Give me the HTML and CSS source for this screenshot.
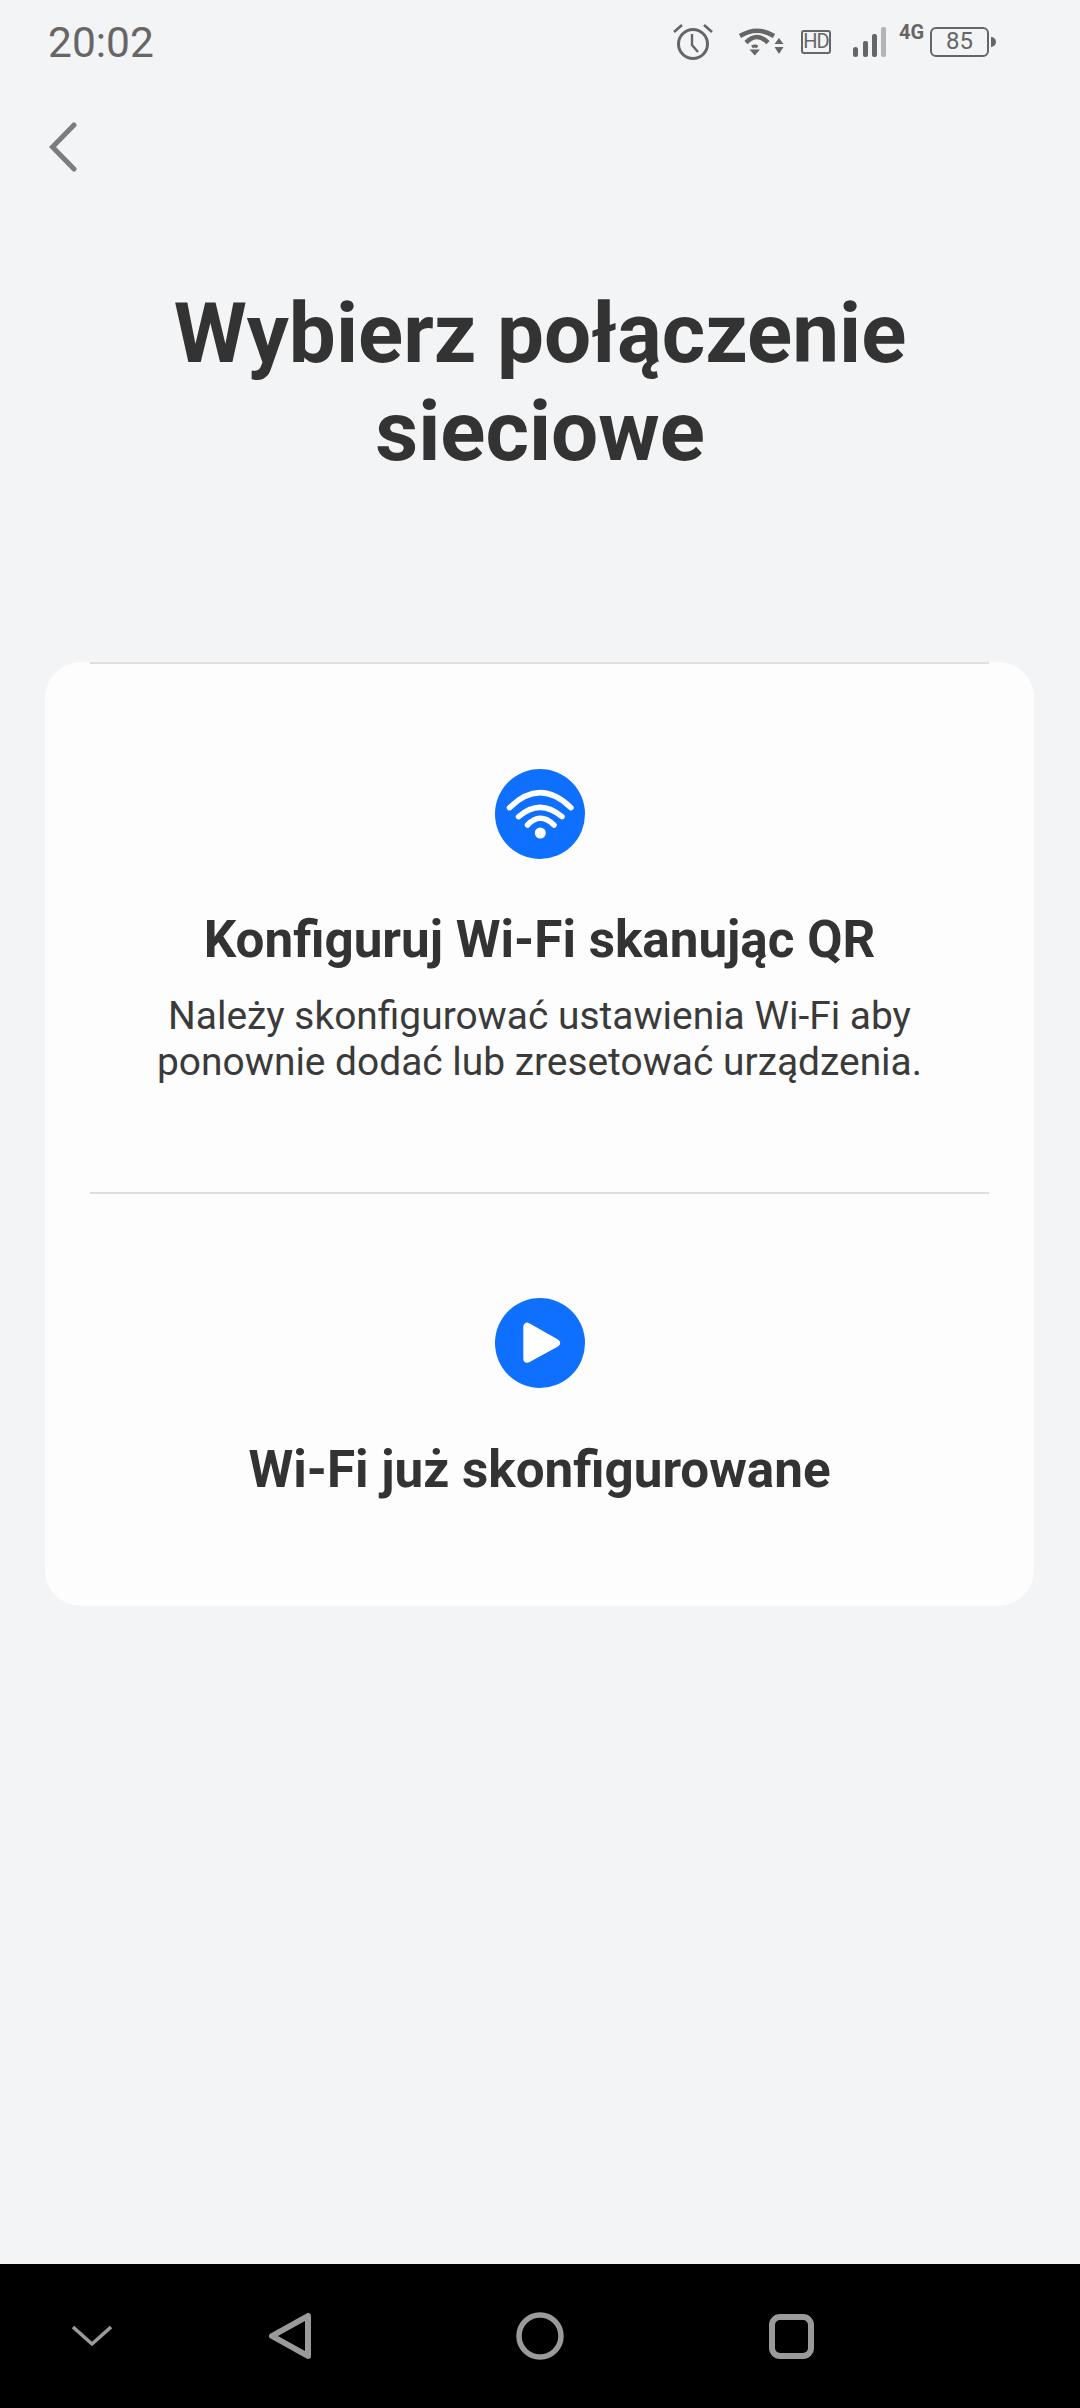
FILE: index.html
```html
<!DOCTYPE html>
<html lang="pl">
  <head>
    <meta charset="UTF-8" />
    <meta name="viewport" content="width=device-width, initial-scale=1.0" />
    <title>Wybierz połączenie sieciowe</title>
    <link rel="stylesheet" href="styles.css">
  </head>
  <body>
    <div class="screen">
      <div class="status-bar">
        <span class="clock">20:02</span>
        <div class="status-icons">
          <svg class="ico-alarm" width="40" height="36" viewBox="0 0 40 36" fill="none" stroke="#666" stroke-width="3">
            <circle cx="20" cy="20" r="14.500" />
            <path d="M19 10v11l6 7" stroke-width="2.400" />
            <path d="M1 8l8-7M39 8l-8-7" stroke-width="2.600" />
          </svg>
          <svg class="ico-wifi" width="46" height="28" viewBox="0 0 46 28" fill="none" stroke="#666">
            <path d="M2 8Q19-2.600 36 8" stroke-width="4.500" />
            <path d="M8 14.700Q19 3.500 30 14.700" stroke-width="4.500" />
            <path d="M11.500 21.500h10.500l-5.200 6z" fill="#666" stroke="none" />
            <path d="M14 19q3-2 5.500 0" stroke-width="3" />
            <path d="M41 10l4.500 6h-9zM41 26l4.500-7h-9z" fill="#666" stroke="none" />
          </svg>
          <span class="ico-hd">HD</span>
          <svg class="ico-signal" width="33" height="30" viewBox="0 0 33 30">
            <rect x="0" y="20" width="5" height="10" rx="2.500" fill="#666" />
            <rect x="10" y="14" width="5" height="16" rx="2" fill="#666" />
            <rect x="19" y="7" width="5" height="23" rx="2" fill="#666" />
            <rect x="28" y="0" width="5" height="30" rx="2" fill="#b4b4b4" />
          </svg>
          <span class="ico-4g">4G</span>
          <div class="battery">
            <span class="battery-body">85</span>
            <span class="battery-tip"></span>
          </div>
        </div>
      </div>

      <div class="top-nav">
        <svg width="30" height="50" viewBox="0 0 30 50" fill="none" stroke="#7b7c7d" stroke-width="5" stroke-linecap="round" stroke-linejoin="miter">
          <path d="M26 3L4.500 25 26 47" />
        </svg>
      </div>

      <h1 class="title">Wybierz połączenie<br />sieciowe</h1>

      <div class="card">
        <div class="option option-qr">
          <svg class="option-icon" width="90" height="90" viewBox="0 0 90 90">
            <circle cx="45" cy="45" r="45" fill="#0f6fff" />
            <g fill="none" stroke="#fff" stroke-width="5.500" stroke-linecap="round">
              <path d="M14.500 38.700Q45 8.700 76 38.700" />
              <path d="M23.500 47.700Q45 28.900 67 47.700" />
              <path d="M32.500 56Q45 42.600 59 56" />
            </g>
            <circle cx="45.300" cy="64" r="5.500" fill="#fff" />
          </svg>
          <h2 class="option-title">Konfiguruj Wi-Fi skanując QR</h2>
          <p class="option-desc">Należy skonfigurować ustawienia Wi-Fi aby<br />ponownie dodać lub zresetować urządzenia.</p>
        </div>
        <div class="option option-done">
          <svg class="option-icon" width="90" height="90" viewBox="0 0 90 90">
            <circle cx="45" cy="45" r="45" fill="#0f6fff" />
            <path d="M32.300 28.700v32L61 45z" fill="#fff" stroke="#fff" stroke-width="8" stroke-linejoin="round" />
          </svg>
          <h2 class="option-title">Wi-Fi już skonfigurowane</h2>
        </div>
      </div>

      <div class="nav-bar">
        <svg width="40" height="22" viewBox="0 0 40 22" fill="none" stroke="#9a9a9a" stroke-width="3.500" stroke-linejoin="round">
          <path d="M1 2l19 17L39 2" />
        </svg>
        <svg width="44" height="48" viewBox="0 0 44 48" fill="none" stroke="#9a9a9a" stroke-width="6" stroke-linejoin="round">
          <path d="M40 4v40L4 24z" />
        </svg>
        <svg width="48" height="48" viewBox="0 0 48 48" fill="none" stroke="#9a9a9a" stroke-width="5.500">
          <circle cx="24" cy="24" r="21" />
        </svg>
        <svg width="45" height="45" viewBox="0 0 45 45" fill="none" stroke="#9a9a9a" stroke-width="6">
          <rect x="3" y="3" width="39" height="39" rx="8" />
        </svg>
      </div>
    </div>
  </body>
</html>
```

FILE: styles.css
```css
* {
  margin: 0;
  padding: 0;
  box-sizing: border-box;
}

body {
  background: #f3f4f6;
  font-family: Roboto, sans-serif;
  color: #333;
}

.screen {
  width: 1080px;
  height: 2408px;
  display: flex;
  flex-direction: column;
  overflow: hidden;
}

.status-bar {
  height: 84px;
  padding: 0 84px 0 48px;
  display: flex;
  justify-content: space-between;
  align-items: center;
  color: #666;
}

.clock {
  margin-top: 2px;
  font-size: 42.500px;
  line-height: 42px;
}

.status-icons {
  display: flex;
  align-items: center;
  height: 36px;
}

.ico-wifi {
  margin-left: 25px;
}

.ico-hd {
  margin-left: 17px;
  width: 30px;
  height: 24px;
  border: 2.500px solid #666;
  border-radius: 3px;
  font-size: 20px;
  line-height: 19px;
  letter-spacing: -1px;
  text-align: center;
  color: #666;
}

.ico-signal {
  margin-left: 22px;
}

.ico-4g {
  margin-left: 13px;
  width: 27px;
  align-self: flex-start;
  font-size: 20px;
  line-height: 16px;
  font-weight: 700;
  color: #666;
}

.battery {
  display: flex;
  align-items: center;
  margin-left: 4px;
}

.battery-body {
  width: 59px;
  height: 30px;
  border: 2.500px solid #666;
  border-radius: 6px;
  font-size: 24px;
  line-height: 25px;
  text-align: center;
  color: #666;
}

.battery-tip {
  width: 5px;
  height: 10px;
  margin-left: 2px;
  background: #666;
  border-radius: 0 5px 5px 0;
}

.top-nav {
  margin-top: 38px;
  height: 50px;
  padding-left: 48px;
}

.title {
  margin-top: 112px;
  height: 378px;
  text-align: center;
  font-size: 83.600px;
  line-height: 98px;
  font-weight: 700;
}

.card {
  margin: 0 46px 0 45px;
  height: 944px;
  background: #fdfdfd;
  border-radius: 36px;
  display: flex;
  flex-direction: column;
}

.option {
  margin: 0 45px;
  border-top: 2px solid #dedfe0;
  display: flex;
  flex-direction: column;
  align-items: center;
  text-align: center;
}

.option-qr {
  height: 530px;
  padding-top: 105px;
}

.option-done {
  padding-top: 104px;
}

.option-title {
  margin-top: 51px;
  font-size: 51.200px;
  line-height: 60px;
  font-weight: 700;
}

.option-done .option-title {
  margin-top: 52px;
}

.option-desc {
  margin-top: 23px;
  font-size: 38.900px;
  line-height: 46px;
  color: #3a3a3a;
  white-space: nowrap;
}

.nav-bar {
  margin-top: auto;
  height: 144px;
  background: #000;
  display: grid;
  grid-template-columns: 183px 213px 288px 215px;
  align-items: center;
  justify-items: center;
}
```
